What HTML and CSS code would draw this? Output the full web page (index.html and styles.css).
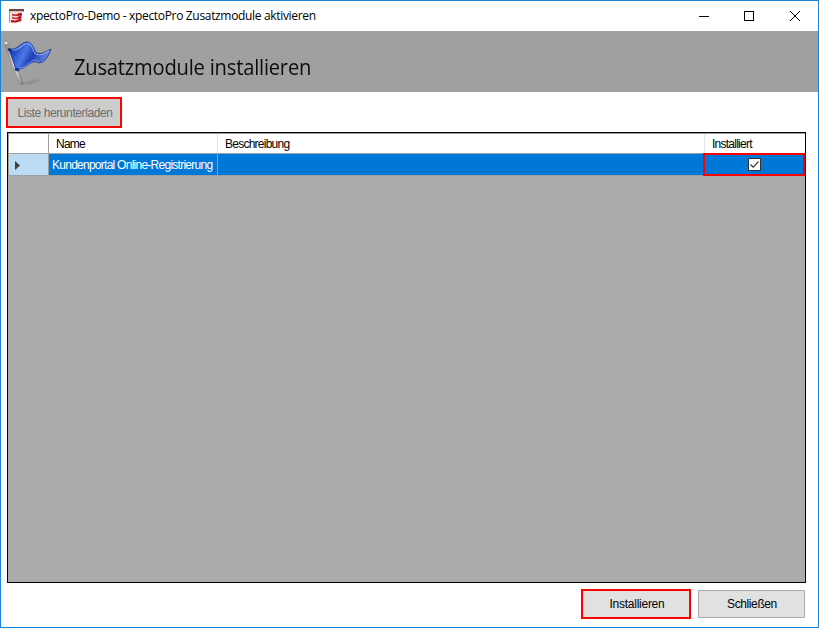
FILE: index.html
```html
<!DOCTYPE html>
<html lang="de">
<head>
<meta charset="utf-8">
<title>xpectoPro-Demo - xpectoPro Zusatzmodule aktivieren</title>
<link rel="stylesheet" href="styles.css">
</head>
<body>
<div class="window">
  <header class="titlebar">
    <svg class="app-icon" width="15" height="15" viewBox="0 0 15 15">
      <path d="M0 0h15v2.500H0z" fill="#75423f"/>
      <path d="M0 2.500h1v11H0z" fill="#999"/>
      <path d="M1 2.500h12v11H1z" fill="#f2dedd"/>
      <path d="M3 5l4 .5 6-1.500v2L8 7 3 6.500zM3 8l4 .7L12 7v2.200L7 10 3 9.500zM2 11l4 .5 6-2v2.500L7 13.500H2z" fill="#c21218"/>
      <path d="M9 4h4l-1 8H9l1-3-1-2z" fill="#ba171b" opacity=".75"/>
    </svg>
    <h1 class="title"><span>xpectoPro-Demo - xpectoPro Zusatzmodule aktivieren</span></h1>
    <svg class="controls" width="102" height="11" viewBox="0 0 102 11" fill="none" stroke="#000">
      <path d="M0 5.500h10M45.500.5h9v9h-9z" shape-rendering="crispEdges"/>
      <path d="M91 0l10 10M101 0l-10 10"/>
    </svg>
  </header>
  <section class="banner">
    <svg class="flag" width="54" height="58" viewBox="0 0 54 58">
      <defs>
        <linearGradient id="cloth" x1="0" y1="0" x2="1" y2=".35">
          <stop offset="0" stop-color="#1c43ad"/><stop offset=".22" stop-color="#2148bd"/>
          <stop offset=".45" stop-color="#4d78e8"/><stop offset=".65" stop-color="#1c3fb4"/><stop offset="1" stop-color="#6588e5"/>
        </linearGradient>
        <linearGradient id="pole"><stop offset="0" stop-color="#777"/><stop offset=".45" stop-color="#f2f2f2"/><stop offset="1" stop-color="#777"/></linearGradient>
        <filter id="soft"><feGaussianBlur stdDeviation="1.200"/></filter>
      </defs>
      <path d="M21 53L43 47 29 53z" fill="#666" opacity=".6" filter="url(#soft)"/>
      <path d="M4 14L18.500 53q2 1.500 4 0L7 13z" fill="url(#pole)" stroke="#777" stroke-width=".5"/>
      <path d="M8 18C16 20 20 11 26 11Q31 11 34 20Q37 26 50 18Q46 31 38 32Q33 29 28 33Q23 38 15 39z" fill="url(#cloth)" stroke="#183394" stroke-width=".8"/>
      <path d="M10 19C18 21 20 13 26 12.500Q30.500 12 33 21Q37 27 48 20" fill="none" stroke="#8fa9ef" stroke-width="1.100"/>
      <path d="M16 38Q24 37 28 32Q34 27 38 31" fill="none" stroke="#7294ee"/>
      <path d="M7 18l4 2M14 38l4 1" stroke="#16328b" stroke-width="3"/>
      <circle cx="5" cy="12" r="2.100" fill="#ddd" stroke="#777" stroke-width=".7"/>
    </svg>
    <h2 class="heading"><span>Zusatzmodule installieren</span></h2>
  </section>
  <main class="content">
    <button class="btn download marked" disabled><span>Liste herunterladen</span></button>
    <div class="datagrid">
      <div class="row head">
        <div class="cell corner"></div>
        <div class="cell"><span class="t-name">Name</span></div>
        <div class="cell"><span class="t-desc">Beschreibung</span></div>
        <div class="cell"><span class="t-inst">Installiert</span></div>
      </div>
      <div class="row selected">
        <div class="cell pointer"><svg width="5" height="9" viewBox="0 0 5 9"><path d="M0 0l5 4.500L0 9z" fill="#404040"/></svg></div>
        <div class="cell"><span class="t-module">Kundenportal Online-Registrierung</span></div>
        <div class="cell"></div>
        <div class="cell check marked"><svg width="13" height="13" viewBox="0 0 13 13"><path d="M.5.5h12v12H.5z" fill="#fff" stroke="#333"/><path d="M2.500 6.500l2.700 2.700 5.300-5.500" fill="none" stroke="#333" stroke-width="1.200"/></svg></div>
      </div>
    </div>
    <footer class="actions">
      <button class="btn install marked"><span>Installieren</span></button>
      <button class="btn close"><span>Schließen</span></button>
    </footer>
  </main>
</div>
</body>
</html>
```
FILE: styles.css
```css
* { box-sizing: border-box; }
body { margin: 0; background: #fff; color: #000; font: 12px/14px "Liberation Sans", Arial, sans-serif; }
h1, h2 { margin: 0; font-weight: 400; }
span { display: inline-block; white-space: nowrap; }
svg { display: block; flex: none; }
.window { width: 819px; height: 628px; border: 1px solid #1883d7; display: flex; flex-direction: column; }
.titlebar { height: 30px; display: flex; align-items: center; padding: 0 17px 0 8px; }
.title { margin-left: 6px; font: 12px/16px "Open Sans", "Noto Sans", sans-serif; }
.title span { letter-spacing: -0.33px; }
.controls { margin-left: auto; }
.banner { height: 61px; background: #a0a0a0; display: flex; }
.heading { margin: 20px 0 0 19px; font: 400 21px/32px "Open Sans", "Noto Sans", sans-serif; color: #0c0c0c; }
.heading span { letter-spacing: -0.22px; transform: scaleX(.96); transform-origin: left; }
.content { flex: 1; display: flex; flex-direction: column; align-items: flex-start; padding: 5px 12px 0 5px; }
.btn { font: inherit; color: #000; background: #e1e1e1; border: 1px solid #adadad; padding: 0; display: flex; align-items: center; justify-content: center; border-radius: 0; }
.marked { border: 2px solid #f00; }
.download { width: 116px; height: 31px; background: #ccc; color: #6d6d6d; padding-left: 2px; letter-spacing: -0.4px; }
.datagrid { width: 799px; height: 451px; margin: 4px 0 0 1px; border: 1px solid #000; background: #ababab; }
.row { display: grid; grid-template-columns: 41px 169px 487px 100px; }
.head { height: 21px; background: #fff; border-top: 1px solid #a0a0a0; border-bottom: 1px solid #a0a0a0; }
.cell { display: flex; align-items: center; border-right: 1px solid #e5e5e5; }
.head .cell { padding-left: 7px; }
.head .corner { border-right-color: #a0a0a0; border-left: 1px solid #a0a0a0; }
.cell:last-child { border-right: 0; }
.t-name, .t-desc, .t-inst { letter-spacing: -0.75px; }
.t-module { letter-spacing: -0.74px; }
.selected { height: 22px; background: #0078d7; color: #fff; border-bottom: 1px solid #a0a0a0; }
.selected .cell { padding-left: 3px; border-right-color: #a0a0a0; }
.selected .pointer { background: #bcdcf4; padding: 2px 0 0 6px; border-left: 1px solid #a0a0a0; }
.selected .check { margin: -1px 0 -1px -2px; padding: 0; justify-content: center; border: 2px solid #f00; }
.actions { display: flex; align-items: center; gap: 7px; margin: 6px 0 0 575px; }
.install { width: 110px; height: 30px; padding-left: 2px; letter-spacing: -0.26px; }
.close { width: 107px; height: 28px; padding-left: 1px; letter-spacing: -0.4px; }
```
